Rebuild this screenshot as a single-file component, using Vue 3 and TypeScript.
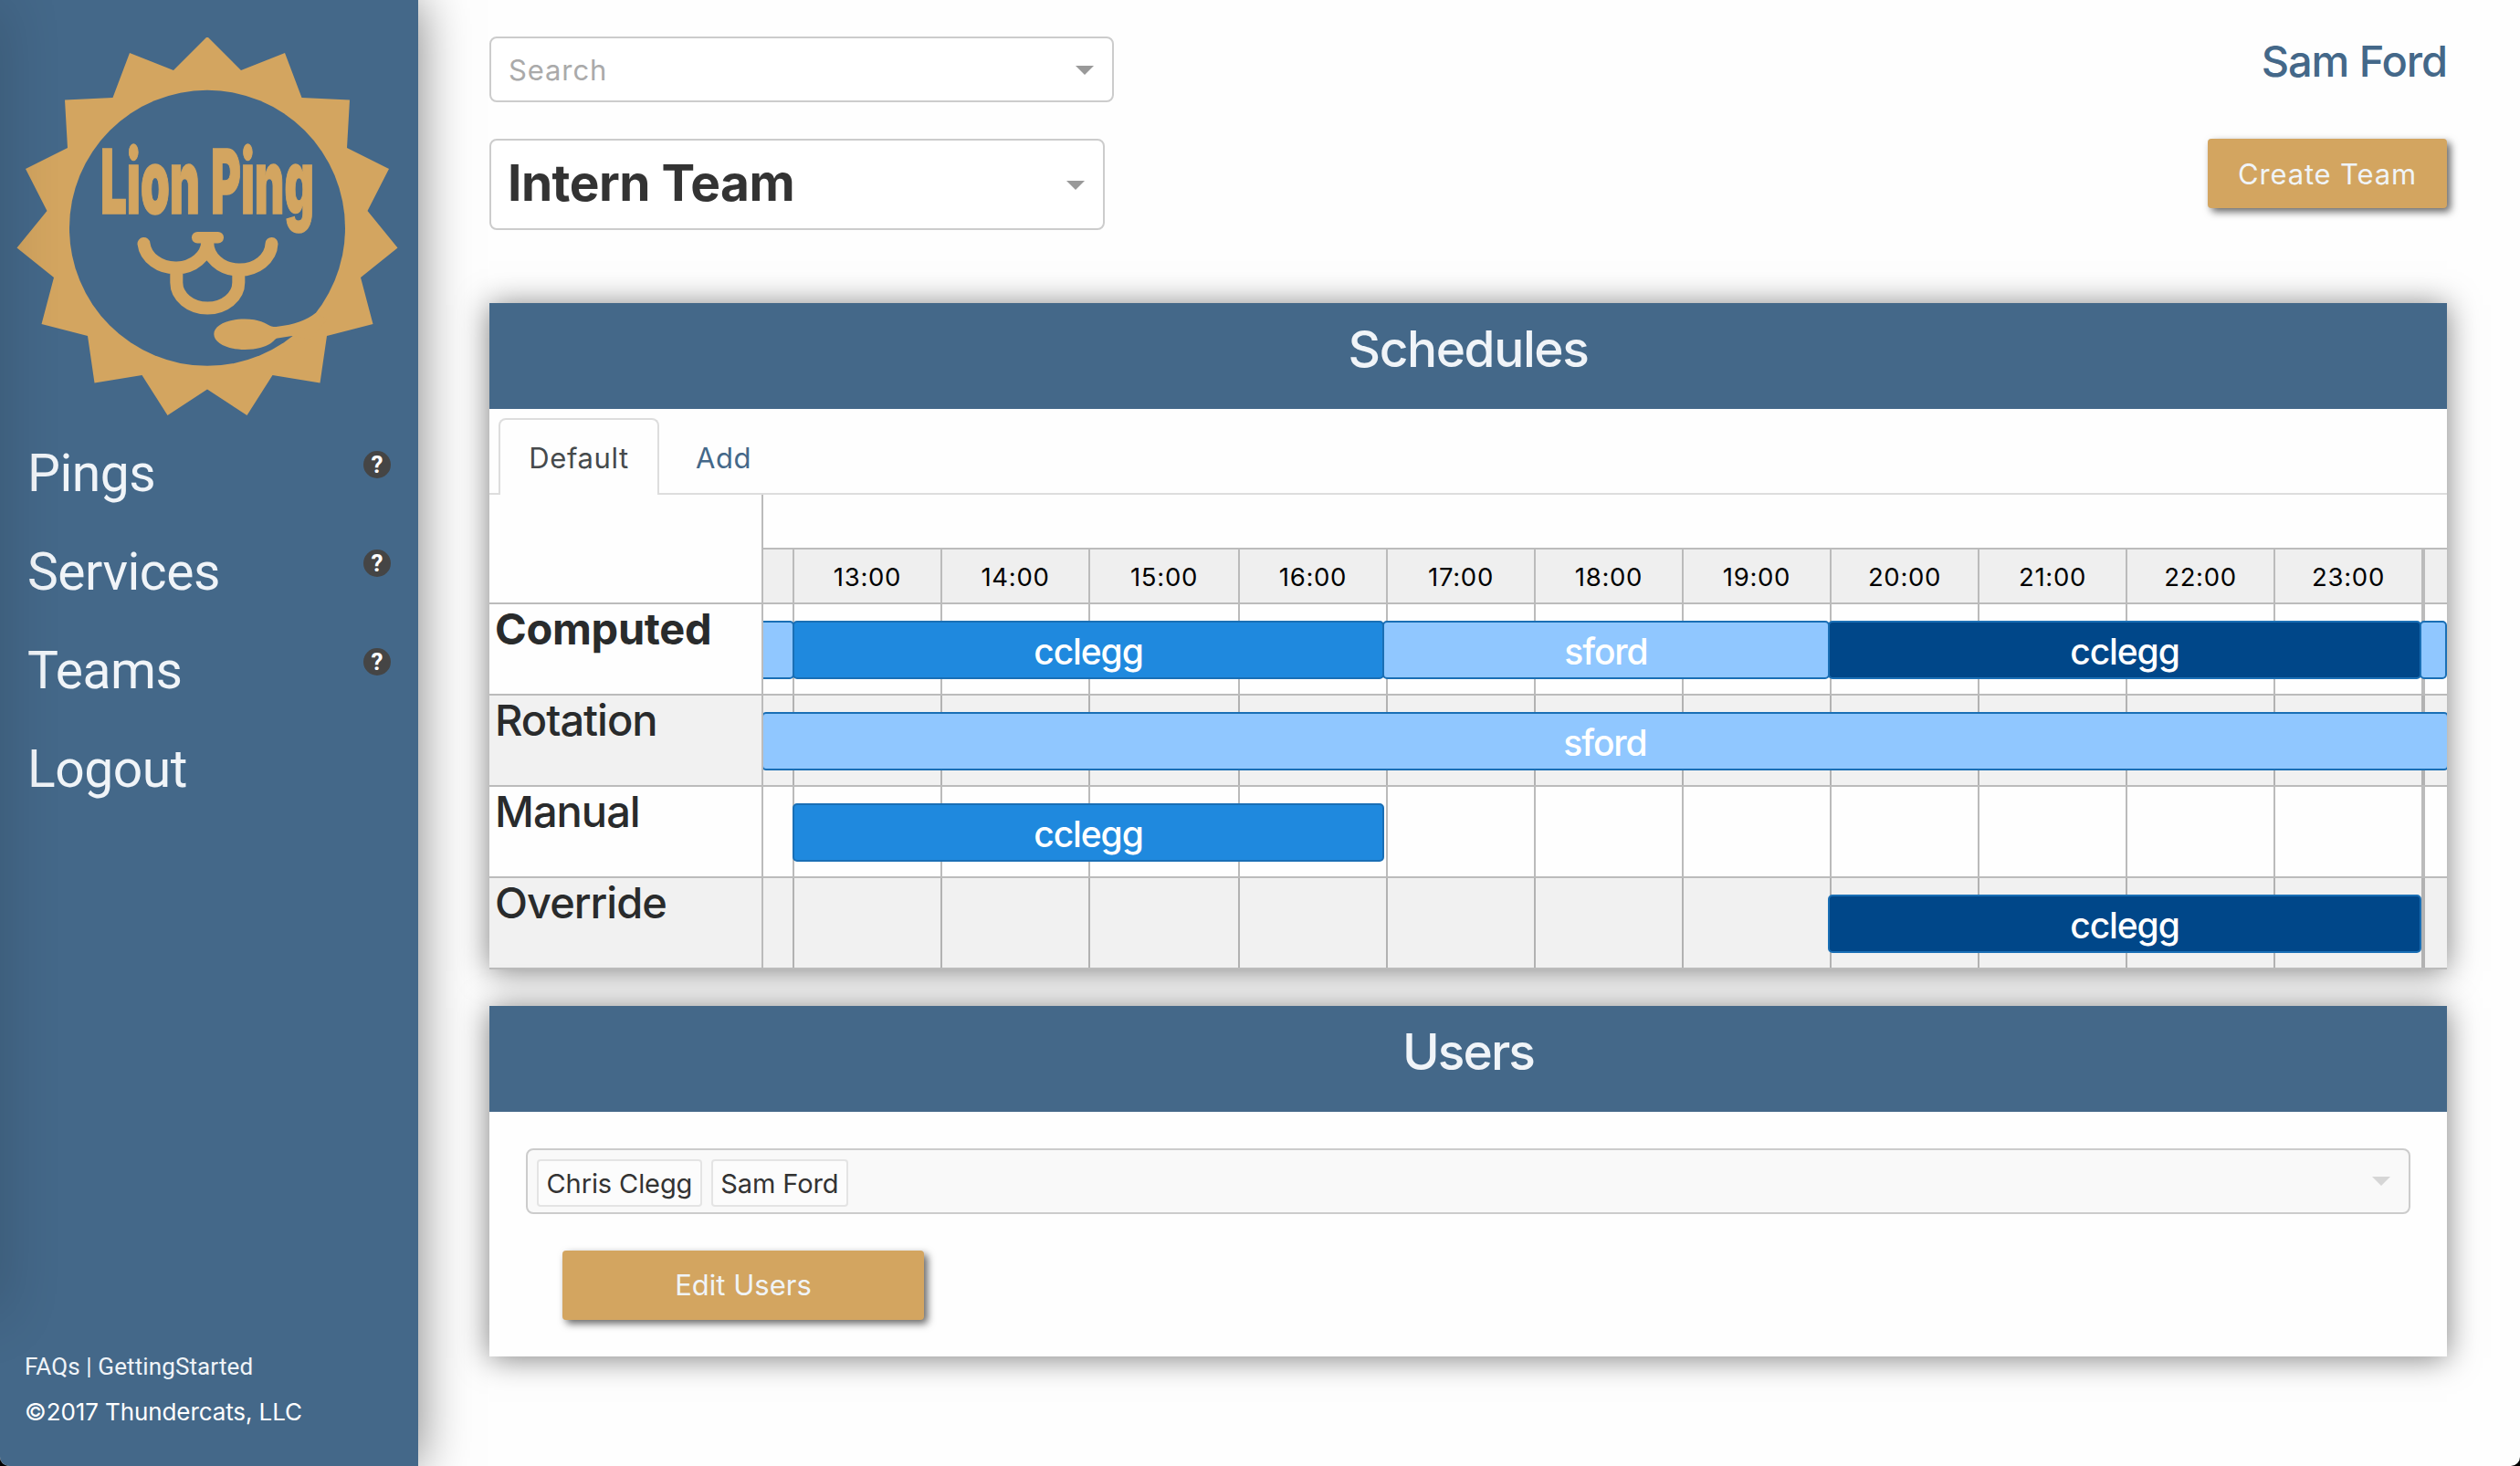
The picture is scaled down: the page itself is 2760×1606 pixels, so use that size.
<script setup lang="ts">
interface NavItem { label: string; help: boolean }
interface Bar { user: string; left: number; width: number; tone: 'light' | 'mid' | 'dark' }
interface Row { label: string; bars: Bar[] }
interface Slot { label: string; width: number }

const nav: NavItem[] = [
  { label: 'Pings', help: true },
  { label: 'Services', help: true },
  { label: 'Teams', help: true },
  { label: 'Logout', help: false },
]

const slots: Slot[] = [
  { label: '', width: 32 },
  { label: '13:00', width: 162 },
  { label: '14:00', width: 162 },
  { label: '15:00', width: 164 },
  { label: '16:00', width: 162 },
  { label: '17:00', width: 162 },
  { label: '18:00', width: 162 },
  { label: '19:00', width: 162 },
  { label: '20:00', width: 162 },
  { label: '21:00', width: 162 },
  { label: '22:00', width: 162 },
  { label: '23:00', width: 162 },
  { label: '', width: 28 },
]

// Bar positions are pixels from the start of the visible time range.
const rows: Row[] = [
  {
    label: 'Computed',
    bars: [
      { user: '', left: -10, width: 44, tone: 'light' },
      { user: 'sford', left: 678, width: 490, tone: 'light' },
      { user: '', left: 1814, width: 30, tone: 'light' },
      { user: 'cclegg', left: 32, width: 648, tone: 'mid' },
      { user: 'cclegg', left: 1166, width: 650, tone: 'dark' },
    ],
  },
  { label: 'Rotation', bars: [{ user: 'sford', left: -2, width: 1848, tone: 'light' }] },
  { label: 'Manual', bars: [{ user: 'cclegg', left: 32, width: 648, tone: 'mid' }] },
  { label: 'Override', bars: [{ user: 'cclegg', left: 1166, width: 650, tone: 'dark' }] },
]

const members: string[] = ['Chris Clegg', 'Sam Ford']
</script>

<template>
  <div class="app">
    <div class="drawer-edge"></div>
    <aside class="sidebar">
      <svg class="logo" width="458" height="464" viewBox="0 0 458 464">
        <path
          fill="#d3a560"
          d="M226 41H228L264 77L312 58L330.5 107L383 109.5L380 162L426 185L402.5 231L435.5 271.5L395 304L408.5 355L358 368L350.5 419.5L298.5 411L270.5 455L227 426.5L183.5 455L155.5 411L103.5 419.5L96 368L45.5 355L59 304L18.5 271.5L51.5 231L28 185L74 162L71 109.5L123.5 107L142 58L190 77Z"
        />
        <circle cx="227" cy="249.8" r="151" fill="#446889" />
        <g fill="none" stroke="#d3a560" stroke-width="14">
          <path stroke-linecap="round" d="M157.500 267A35 29.500 0 0 0 227.300 265A35 29.500 0 0 0 297.500 267" />
          <path d="M193.300 300V309.500A34 28 0 0 0 261.300 309.500V300" />
        </g>
        <rect x="210" y="254" width="35" height="12.500" rx="6.200" fill="#d3a560" />
        <path
          fill="#d3a560"
          d="M234.300 366C234.300 356 250 349.500 268 349.500C284 349.500 291 354.500 296 357C299 358.300 301 358.200 304 357.800C322 355.500 336 351 345.500 343L358 350L340 372L320 368L304 370.500C301 371 300 374 296 376.500C290 380 282 383 268 383C250 383 234.300 376 234.300 366Z"
        />
        <g class="wordmark">
          <text x="110" y="234" textLength="109" lengthAdjust="spacingAndGlyphs">Lion</text>
          <text x="231" y="234" textLength="113" lengthAdjust="spacingAndGlyphs">Ping</text>
        </g>
      </svg>

      <nav class="nav">
        <a v-for="item in nav" :key="item.label" class="nav-item">
          <span>{{ item.label }}</span>
          <span v-if="item.help" class="help">?</span>
        </a>
      </nav>

      <footer class="foot">
        <p class="links"><a>FAQs</a> | <a>GettingStarted</a></p>
        <p class="copy">©2017 Thundercats, LLC</p>
      </footer>
    </aside>

    <main class="main">
      <header class="top">
        <div class="pickers">
          <div class="select search">
            <span class="placeholder">Search</span>
            <i class="caret"></i>
          </div>
          <div class="select team">
            <span class="team-name">Intern Team</span>
            <i class="caret"></i>
          </div>
        </div>
        <div class="account">
          <a class="who">Sam Ford</a>
          <button class="btn create">Create Team</button>
        </div>
      </header>

      <section class="panel">
        <h2 class="title schedules-title">Schedules</h2>
        <div class="tabs">
          <a class="tab active">Default</a>
          <a class="tab">Add</a>
        </div>
        <div class="timeline">
          <div class="corner"></div>
          <div class="axis">
            <div class="axis-major"></div>
            <div class="axis-minor">
              <span
                v-for="(s, i) in slots"
                :key="i"
                class="cell"
                :style="{ width: s.width + 'px' }"
              >{{ s.label }}</span>
            </div>
          </div>
          <template v-for="row in rows" :key="row.label">
            <div class="row-label" :class="{ computed: row.label === 'Computed' }">{{ row.label }}</div>
            <div class="row-track">
              <span
                v-for="(s, i) in slots"
                :key="i"
                class="cell"
                :style="{ width: s.width + 'px' }"
              ></span>
              <div
                v-for="(b, i) in row.bars"
                :key="'b' + i"
                class="bar"
                :class="b.tone"
                :style="{ left: b.left + 'px', width: b.width + 'px' }"
              >{{ b.user }}</div>
            </div>
          </template>
        </div>
      </section>

      <section class="panel users">
        <h2 class="title users-title">Users</h2>
        <div class="users-body">
          <div class="select multi">
            <span v-for="m in members" :key="m" class="tag">{{ m }}</span>
            <i class="caret"></i>
          </div>
          <button class="btn edit">Edit Users</button>
        </div>
      </section>
    </main>
  </div>
</template>

<style>
html,
body {
  margin: 0;
  background: #000;
}
</style>

<style scoped>
* {
  box-sizing: border-box;
}

.app {
  position: relative;
  display: flex;
  width: 2760px;
  height: 1606px;
  overflow: hidden;
  border-radius: 0 0 10px 10px;
  background: #fefefe;
  font-family: Inter, "Liberation Sans", sans-serif;
}

.drawer-edge {
  position: absolute;
  z-index: 2;
  left: -40px;
  top: 0;
  width: 40px;
  height: 1440px;
  box-shadow: 0 0 66px rgba(0, 0, 0, 0.2);
}

.sidebar {
  display: flex;
  flex-direction: column;
  flex: none;
  width: 458px;
  height: 1606px;
  background: #446889;
  box-shadow: 0 0 52px rgba(0, 0, 0, 0.5);
}

.logo {
  display: block;
  flex: none;
}

.wordmark text {
  font-family: Inter, sans-serif;
  font-weight: 900;
  font-size: 97px;
  fill: #d3a560;
  stroke: #d3a560;
  stroke-width: 1.5px;
}

.nav {
  display: flex;
  flex-direction: column;
}

.nav-item {
  display: flex;
  justify-content: space-between;
  height: 108px;
  padding: 0 30px;
  line-height: 109px;
  font-family: Roboto, sans-serif;
  font-size: 57px;
  letter-spacing: -0.5px;
  color: #f0f4f8;
}

.help {
  width: 30px;
  height: 30px;
  margin-top: 30px;
  border-radius: 50%;
  background: #454545;
  color: #fff;
  font-size: 26px;
  font-weight: 700;
  line-height: 31px;
  letter-spacing: 0;
  text-align: center;
}

.foot {
  margin-top: auto;
  padding: 0 0 34px 27px;
  font-size: 26px;
}

.foot p {
  margin: 0;
  height: 50px;
  line-height: 50px;
}

.links {
  font-family: Roboto, sans-serif;
  letter-spacing: 0.11px;
  color: #f0f4f8;
}

.copy {
  letter-spacing: -0.1px;
  color: #fff;
}

.main {
  display: flex;
  flex-direction: column;
  width: 2144px;
  margin-left: 78px;
  padding-top: 40px;
}

.top {
  display: flex;
  justify-content: space-between;
  height: 292px;
}

.pickers {
  display: flex;
  flex-direction: column;
  gap: 40px;
}

.select {
  display: flex;
  align-items: center;
  border: 2px solid #ccc;
  border-radius: 8px;
  background: #fff;
}

.caret {
  margin-left: auto;
  border: 10px solid transparent;
  border-top-color: #999;
  border-bottom: 0;
}

.search {
  width: 684px;
  height: 72px;
  padding: 1px 20px 0 19px;
}

.placeholder {
  font-size: 31px;
  letter-spacing: 0.89px;
  color: #aaa;
}

.team {
  width: 674px;
  height: 100px;
  padding: 0 20px 0 18px;
}

.team .caret {
  margin-top: 2px;
}

.team-name {
  margin-top: -4px;
  font-size: 55px;
  font-weight: 700;
  letter-spacing: -0.53px;
  color: #333;
}

.account {
  display: flex;
  flex-direction: column;
  align-items: flex-end;
}

.who {
  height: 112px;
  line-height: 54px;
  font-size: 47px;
  font-weight: 500;
  letter-spacing: -1.1px;
  color: #446889;
}

.btn {
  display: block;
  height: 76px;
  padding: 0;
  border: 0;
  border-radius: 4px;
  background: #d3a560;
  box-shadow: 4px 4px 8px rgba(0, 0, 0, 0.6);
  color: #f0f4f8;
  font-family: inherit;
  font-size: 31px;
  line-height: 77px;
  text-align: center;
}

.create {
  width: 262px;
  letter-spacing: 0.84px;
}

.panel {
  background: #fefefe;
  box-shadow: 0 2px 32px rgba(0, 0, 0, 0.5);
}

.title {
  margin: 0;
  height: 116px;
  line-height: 100px;
  background: #446889;
  color: #f0f4f8;
  font-size: 55px;
  font-weight: 500;
  text-align: center;
}

.schedules-title {
  letter-spacing: -1.4px;
}

.users-title {
  letter-spacing: -1.9px;
}

.tabs {
  display: flex;
  gap: 4px;
  height: 94px;
  padding: 10px 10px 0;
  border-bottom: 2px solid #ddd;
}

.tab {
  height: 84px;
  padding: 0 34px;
  border: 2px solid transparent;
  border-bottom: 0;
  border-radius: 8px 8px 0 0;
  line-height: 83px;
  font-size: 31px;
  letter-spacing: 0.6px;
  color: #446889;
}

.tab.active {
  width: 176px;
  padding: 0;
  border-color: #ddd;
  background: #fefefe;
  color: #464a4c;
  text-align: center;
}

.timeline {
  display: grid;
  grid-template-columns: 300px 1844px;
  grid-template-rows: 120px repeat(4, 100px);
}

.corner,
.row-label {
  border-right: 2px solid #bbb;
  border-bottom: 2px solid #bbb;
}

.axis {
  display: flex;
  flex-direction: column;
}

.axis-major {
  height: 60px;
  border-bottom: 2px solid #bbb;
}

.axis-minor {
  display: flex;
  height: 60px;
  border-bottom: 2px solid #bbb;
  background: #efefef;
  font-size: 27.5px;
  line-height: 60px;
  letter-spacing: 0.7px;
  text-align: center;
  color: #000;
}

.cell {
  flex: none;
  border-left: 2px solid #bbb;
}

.cell:first-child {
  border-left: 0;
}

.cell:nth-child(13) {
  border-left-width: 4px;
}

.row-label {
  padding-left: 6px;
  line-height: 54px;
  font-size: 47px;
  font-weight: 500;
  letter-spacing: -1px;
  color: #292b2c;
}

.row-label.computed {
  font-weight: 700;
  letter-spacing: -0.3px;
}

.row-track {
  position: relative;
  display: flex;
  overflow: hidden;
  border-bottom: 2px solid #bbb;
}

.row-label:nth-child(4n + 1),
.row-track:nth-child(4n + 2) {
  background: #f1f1f1;
}

.row-track:nth-child(4n + 2) .cell {
  border-color: #b2b2b2;
}

.bar {
  position: absolute;
  top: 18px;
  height: 64px;
  border: 2px solid #1a6fb5;
  border-radius: 5px;
  line-height: 63px;
  font-size: 39px;
  font-weight: 500;
  letter-spacing: -1.1px;
  text-align: center;
  color: #fff;
}

.light {
  background: #90c7ff;
}

.mid {
  background: #1f89de;
}

.dark {
  background: #004789;
}

.users {
  height: 384px;
  margin-top: 40px;
}

.users-body {
  display: flex;
  flex-direction: column;
  gap: 40px;
  padding: 40px;
}

.multi {
  gap: 10px;
  height: 72px;
  padding: 0 20px 0 10px;
  background: #f9f9f9;
}

.multi .caret {
  border-top-color: #d6d6d6;
}

.tag {
  height: 52px;
  margin-top: 4px;
  padding: 0 8.5px;
  border: 2px solid #e4e4e4;
  border-radius: 4px;
  background: #fcfcfc;
  line-height: 49px;
  font-size: 29px;
  letter-spacing: -0.1px;
  color: #333;
}

.edit {
  width: 396px;
  margin-left: 40px;
  line-height: 74px;
}
</style>
